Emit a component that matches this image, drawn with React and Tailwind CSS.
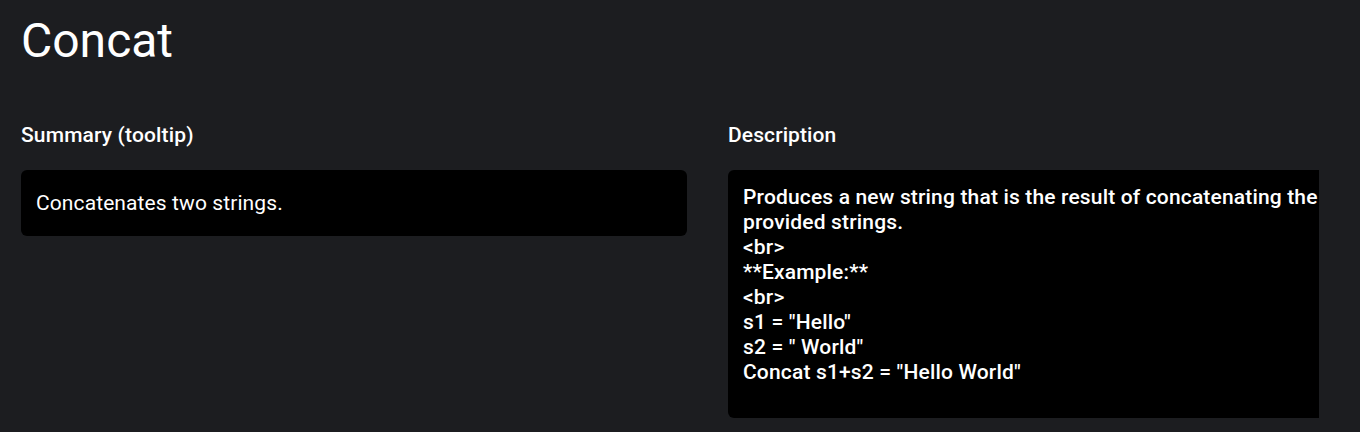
import React from 'react';

const descriptionLines = [
  'Produces a new string that is the result of concatenating the',
  'provided strings.',
  '<br>',
  '**Example:**',
  '<br>',
  's1 = "Hello"',
  's2 = " World"',
  'Concat s1+s2 = "Hello World"',
];

const App = () => {
  return (
    <div className="w-[1360px] h-[432px] bg-[#1c1d20] text-white font-['Roboto',sans-serif] overflow-hidden">
      <div className="pl-[21px] pr-[41px]">
        <h1 className="text-[48px] leading-none pt-[17px] h-[108px]">Concat</h1>
        <div className="overflow-hidden">
          <div className="grid grid-cols-[666px_666px] gap-x-[41px]">
            <div>
              <h2 className="text-[21px] font-medium leading-[26px] mt-[14px] h-[48px] tracking-[0.15px]">Summary (tooltip)</h2>
              <div className="bg-black rounded-md h-[66px] px-[15px] pt-[2px] flex items-center text-[21px] tracking-[0.1px]">
                Concatenates two strings.
              </div>
            </div>
            <div>
              <h2 className="text-[21px] font-medium leading-[26px] mt-[14px] h-[48px] tracking-[0.1px]">Description</h2>
              <div className="bg-black rounded-md h-[248px] px-[15px] pt-[15px] overflow-hidden">
                <div className="text-[21px] leading-[25px] font-medium tracking-[0.16px] whitespace-nowrap">
                  {descriptionLines.map((line, i) => (
                    <div key={i}>{line}</div>
                  ))}
                </div>
              </div>
            </div>
          </div>
        </div>
      </div>
    </div>
  );
};

export default App;
